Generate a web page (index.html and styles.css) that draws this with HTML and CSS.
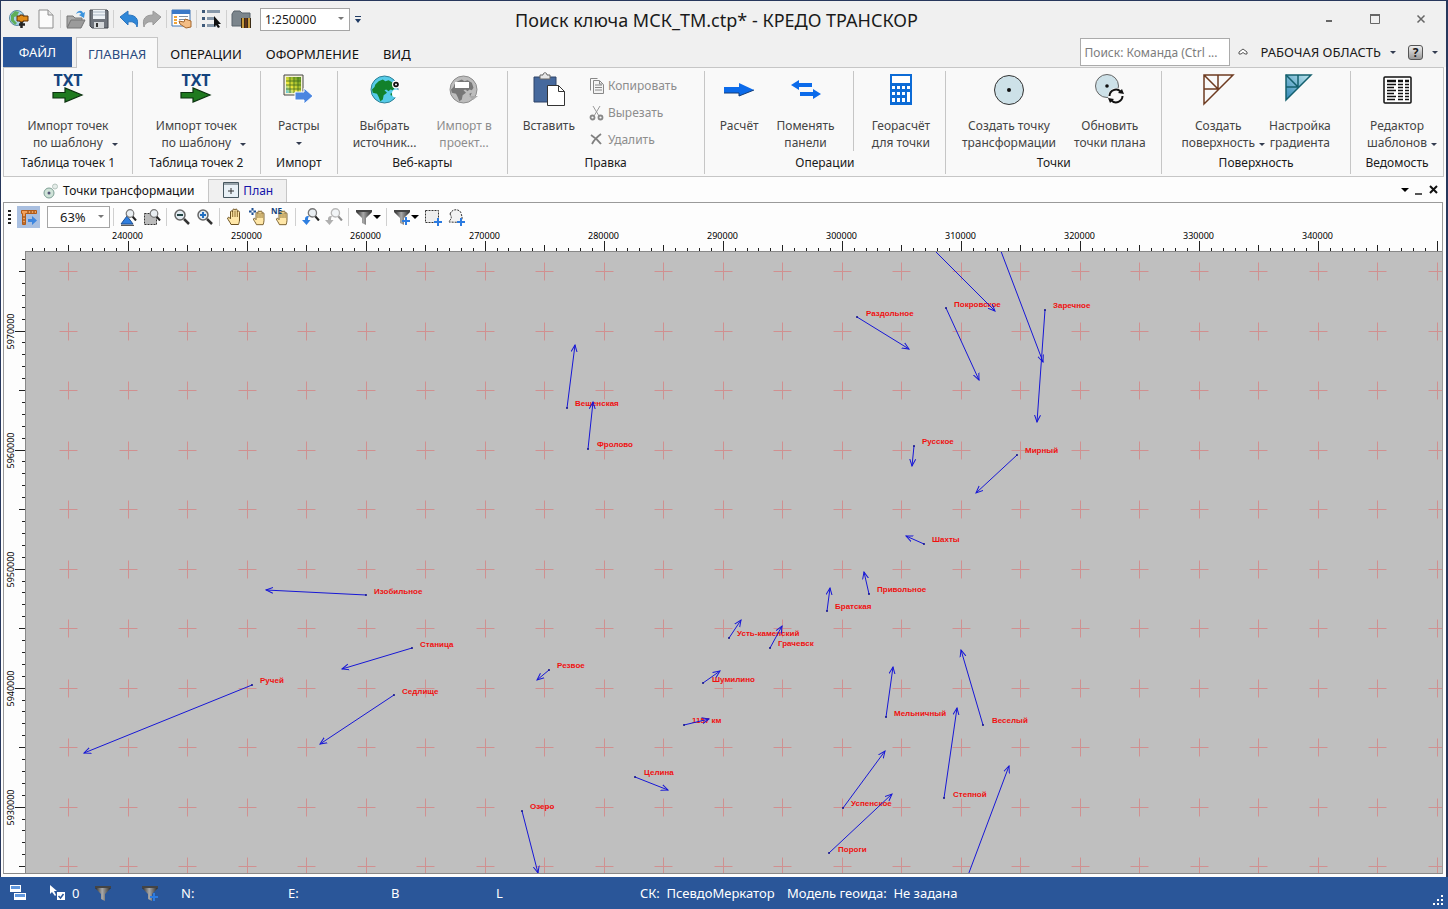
FILE: index.html
```html
<!DOCTYPE html>
<html lang="ru">
<head>
<meta charset="utf-8">
<title>Поиск ключа МСК_ТМ.ctp* - КРЕДО ТРАНСКОР</title>
<link rel="stylesheet" href="styles.css">
</head>
<body>
<svg class="defs" aria-hidden="true">
  <defs>
    <linearGradient id="gFunnel" x1="0" x2="1"><stop offset="0" stop-color="#222"/><stop offset=".45" stop-color="#aaa"/><stop offset="1" stop-color="#222"/></linearGradient>
    <linearGradient id="gTeal" x1="0" y1="1" x2="1" y2="0"><stop offset="0" stop-color="#2f86b5"/><stop offset="1" stop-color="#bfe6ee"/></linearGradient>
    <linearGradient id="gRaster" x1="0" y1="1" x2="1" y2="0"><stop offset="0" stop-color="#5cc6f0"/><stop offset=".35" stop-color="#f2e93c"/><stop offset="1" stop-color="#4f8f1e"/></linearGradient>
    <symbol id="funnel" viewBox="0 0 18 18"><path d="M1 2h16v2l-6 6v7l-4-2v-5L1 4z" fill="url(#gFunnel)"/><path d="M1 2h16v2H1z" fill="#444"/></symbol>
    <symbol id="plus" viewBox="0 0 8 8"><path d="M3 0h2v3h3v2H5v3H3V5H0V3h3z" fill="#2c7be0"/></symbol>
    <symbol id="hand" viewBox="0 0 18 18"><path d="M5 16.500C4 14 2 12 1.500 10c.7-1.200 2-.7 3 .8V4c0-1.500 2-1.500 2.200 0V2.200c0-1.500 2.200-1.500 2.300 0V2c.3-1.400 2.200-1.200 2.300.3v1.500c.4-1.300 2.200-1 2.200.5V12c0 2-.7 3-1 4.500z" fill="#ffe7a8" stroke="#6b5121"/><path d="M6.700 4v5M9 3v6M11.300 3.500V9" stroke="#8a6a2a"/></symbol>
    <symbol id="lens" viewBox="0 0 12 12"><path d="M7.500 7.500l3.500 4" stroke="#222" stroke-width="2"/><circle cx="5" cy="4.500" r="3.800" fill="#e9eef2" stroke="#777" stroke-width="1.200"/></symbol>
    <symbol id="txt" viewBox="0 0 34 34"><text x="17" y="14" text-anchor="middle" class="txt-mark">TXT</text><path d="M2 20.500h12V16l17 7-17 7v-4H2z" fill="#1f7a1f" stroke="#0c3310" stroke-width="1.200"/></symbol>
    <symbol id="land" viewBox="0 0 30 30"><path d="M4 9l4-4 5-2 3 2 4-1 5 3 2 6-2 3-3-1-2 2-3-2-2 1 3 3-4 3-1 5-3 2-2-5-2-4-5-1-1-4 3-3zM22 20l3-1-2 4z"/></symbol>
  </defs>
</svg>
<div class="window">
  <header class="titlebar">
    <div class="quick">
      <span class="app-mark"><svg width="20" height="20" viewBox="0 0 20 20"><circle cx="8" cy="9" r="7.500" fill="#a9d3ea" stroke="#5b8aa3"/><path d="M2 6l4-4 4 1-2 4-3 1v3l3 3-2 2-4-4z" fill="#5fae5a"/><path d="M8 7h3V6h3v1h5v5h-5v1h-3v-1H8z" fill="#e08a17" stroke="#5c2e05"/><path d="M12.500 13v6M10 15.500h6" stroke="#222" stroke-width="2.500"/></svg></span>
      <button class="qb" aria-label="Создать"><svg width="20" height="20" viewBox="0 0 20 20"><path d="M3 1h9l5 5v13H3z" fill="#fbfbfb" stroke="#8d8d8d"/><path d="M12 1v5h5" fill="#e3e3e3" stroke="#8d8d8d"/></svg></button>
      <i class="vsep"></i>
      <button class="qb" aria-label="Открыть"><svg width="22" height="20" viewBox="0 0 22 20"><path d="M2 18V7h6l2 2h7v3" fill="#a9a9a9" stroke="#777"/><path d="M2 19l4-8h14l-4 8z" fill="#9b9b9b" stroke="#747474"/><path d="M11 5c2-4 6-4 7-1l2-1-1 6-5-3 2-1c-1-2-3-1-5 0z" fill="#3b93dd"/></svg></button>
      <button class="qb" aria-label="Сохранить"><svg width="20" height="20" viewBox="0 0 20 20"><path d="M1 1h17l1 1v17H3l-2-2z" fill="#6f747c" stroke="#42464d"/><path d="M4 1h12v9H4z" fill="#eef2f6"/><path d="M4 3h12M4 6h12" stroke="#a7b4c2"/><path d="M5 13h10v6H5z" fill="#d5d8db"/><path d="M7 14h2v4H7z" fill="#333"/></svg></button>
      <i class="vsep"></i>
      <button class="qb" aria-label="Отменить"><svg width="20" height="18" viewBox="0 0 20 18"><path d="M1 7l8-6v4c8 0 11 4 9 12-1-4-4-6-9-5v3z" fill="#2f87d8" stroke="#2b74bd"/></svg></button>
      <button class="qb" aria-label="Повторить"><svg width="20" height="18" viewBox="0 0 20 18"><path d="M19 7l-8-6v4C3 5 0 9 2 17c1-4 4-6 9-5v3z" fill="#a8a8a8" stroke="#999"/></svg></button>
      <i class="vsep"></i>
      <button class="qb" aria-label="Свойства таблицы"><svg width="21" height="20" viewBox="0 0 21 20"><path d="M1 1h18v16H1z" fill="#fff" stroke="#4377b5"/><path d="M1 1h18v4H1z" fill="#3a79c8"/><path d="M3 7h3v2H3zM3 10h3v2H3zM3 13h3v2H3z" fill="#f0a53a"/><path d="M8 7.500h9M8 10.500h9" stroke="#7d8fa3"/><path d="M8 12l5 1 1-3 6 2v6l-5 1-6-4z" fill="#f3bd85" stroke="#a4662c"/></svg></button>
      <i class="vsep"></i>
      <button class="qb" aria-label="Выбор слоёв"><svg width="21" height="20" viewBox="0 0 21 20"><path d="M1 1h3v3H1zM1 8h3v3H1zM1 15h3v3H1z" fill="#3f5a7a"/><path d="M6 2.500h13M6 9.500h8M6 16.500h9" stroke="#8798aa" stroke-width="3"/><path d="M13 7v11l2-2 2 3 2-1-2-3h3z" fill="#111"/></svg></button>
      <i class="vsep"></i>
      <button class="qb" aria-label="Архив"><svg width="22" height="20" viewBox="0 0 22 20"><path d="M1 17V5l2-3h6l2 2h8v13z" fill="#7b858c" stroke="#59626a"/><path d="M10 9h10v10H10z" fill="#3a2b16"/><path d="M12 9v10M18 9v10" stroke="#c99b3c" stroke-width="2"/><path d="M15 9v10" stroke="#8a3f20"/></svg></button>
      <span class="combo scale"><select aria-label="Масштаб плана"><option>1:250000</option></select><i class="caret dim"></i></span>
      <button class="more" aria-label="Настроить панель"><svg width="6" height="7" viewBox="0 0 6 7"><path d="M0 .500h6" stroke="#1f3a63"/><path d="M0 3h6L3 7z" fill="#1f3a63"/></svg></button>
    </div>
    <h1>Поиск ключа МСК_ТМ.ctp* - КРЕДО ТРАНСКОР</h1>
    <div class="winctl">
      <button aria-label="Свернуть"><svg width="10" height="10" viewBox="0 0 10 10"><path d="M2 7h6" stroke="#666" stroke-width="2"/></svg></button>
      <button aria-label="Развернуть"><svg width="10" height="10" viewBox="0 0 10 10"><path d="M.500 1h9v8.500h-9z" fill="none" stroke="#666"/><path d="M0 1h10" stroke="#666" stroke-width="2"/></svg></button>
      <button aria-label="Закрыть"><svg width="10" height="10" viewBox="0 0 10 10"><path d="M1.500 1.500l7 7M8.500 1.500l-7 7" stroke="#666" stroke-width="1.500"/></svg></button>
    </div>
  </header>

  <nav class="menu">
    <button class="file">ФАЙЛ</button>
    <button class="tab on">ГЛАВНАЯ</button>
    <button class="tab">ОПЕРАЦИИ</button>
    <button class="tab">ОФОРМЛЕНИЕ</button>
    <button class="tab">ВИД</button>
    <div class="menu-right">
      <input class="search" type="text" aria-label="Поиск команды" placeholder="Поиск: Команда (Ctrl ...">
      <button class="plain" aria-label="Свернуть ленту"><svg width="10" height="8" viewBox="0 0 10 8"><path d="M1 4l4-3 4 3v2H7L5 4.500 3 6H1z" fill="#fff" stroke="#555"/></svg></button>
      <button class="plain area">РАБОЧАЯ ОБЛАСТЬ<i class="caret"></i></button>
      <button class="plain area" aria-label="Справка"><span class="help">?</span><i class="caret"></i></button>
    </div>
  </nav>

  <section class="ribbon" aria-label="Лента">
    <div class="group"><div class="items">
      <button class="big"><svg width="34" height="34"><use href="#txt"/></svg><span>Импорт точек<br>по шаблону<i class="caret far"></i></span></button>
    </div><h2>Таблица точек 1</h2></div>
    <div class="group"><div class="items">
      <button class="big"><svg width="34" height="34"><use href="#txt"/></svg><span>Импорт точек<br>по шаблону<i class="caret far"></i></span></button>
    </div><h2>Таблица точек 2</h2></div>
    <div class="group"><div class="items">
      <button class="big"><svg width="34" height="34" viewBox="0 0 34 34"><path d="M2 3h19v20H2z" fill="#f6f3d8" stroke="#444"/><path d="M4 5h15v16H4z" fill="url(#gRaster)"/><path d="M8 5v16M12 5v16M16 5v16M4 9h15M4 13h15M4 17h15" stroke="#3f6a1c" stroke-width=".8"/><path d="M13 20h9v-4l9 8-9 8v-4h-9z" fill="#4b86e0" stroke="#fff"/></svg><span>Растры<br><i class="caret solo"></i></span></button>
    </div><h2>Импорт</h2></div>
    <div class="group"><div class="items g20">
      <button class="big"><svg width="34" height="34" viewBox="0 0 34 34"><circle cx="16.500" cy="17.500" r="13.500" fill="#55cbe8" stroke="#2e7f95"/><use href="#land" x="4" y="5" width="25" height="25" fill="#12812b"/><circle cx="28" cy="12.500" r="4" fill="#fff"/><circle cx="28" cy="12.500" r="2.800" fill="#111"/><circle cx="28" cy="12.500" r="1" fill="#fff"/><circle cx="28" cy="21.500" r="4" fill="#fff"/></svg><span>Выбрать<br>источник...</span></button>
      <button class="big" disabled><svg width="34" height="34" viewBox="0 0 34 34"><circle cx="16.500" cy="17.500" r="13.500" fill="#bdbdbd" stroke="#8c8c8c"/><use href="#land" x="4" y="5" width="25" height="25" fill="#777"/><path d="M8 10h14v6H8z" fill="#fff"/><path d="M22 24h9l-5 4z" fill="#aaa"/></svg><span>Импорт в<br>проект...</span></button>
    </div><h2>Веб-карты</h2></div>
    <div class="group"><div class="items g15 start">
      <button class="big"><svg width="34" height="34" viewBox="0 0 34 34"><path d="M2 5h22v25H2z" fill="#46699d" stroke="#2e4569"/><path d="M8 7V3h3c0-3 4-3 4 0h3v4z" fill="#e6e6e6" stroke="#666"/><path d="M15.500 13.500h11l6 6v14h-17z" fill="#fff" stroke="#333"/><path d="M26.500 13.500v6h6" fill="none" stroke="#333"/></svg><span>Вставить</span></button>
      <div class="stack">
        <button disabled><svg width="16" height="18" viewBox="0 0 16 18"><path d="M1.500 13.500v-12h7" fill="none" stroke="#888"/><path d="M4.500 3.500h6l4 4v9h-10z" fill="#f3f3f3" stroke="#888"/><path d="M6 8h7M6 10.500h7M6 13h7M10.500 4v3h3" fill="none" stroke="#888"/></svg>Копировать</button>
        <button disabled><svg width="16" height="18" viewBox="0 0 16 18"><path d="M4 2l6 10M11 2L5 12" stroke="#999"/><circle cx="3.500" cy="13.500" r="2" fill="none" stroke="#888" stroke-width="1.800"/><circle cx="11.500" cy="13.500" r="2" fill="none" stroke="#888" stroke-width="1.800"/></svg>Вырезать</button>
        <button disabled><svg width="16" height="18" viewBox="0 0 16 18"><path d="M2 4c3 2 7 5 10 9M12 3C8 6 5 9 3 13" fill="none" stroke="#808080" stroke-width="1.800"/></svg>Удалить</button>
      </div>
    </div><h2>Правка</h2></div>
    <div class="group"><div class="items g19">
      <button class="big"><svg width="34" height="34" viewBox="0 0 34 34"><path d="M2 15h15v-4l15 7-15 6v-3H2z" fill="#0c6bea"/><path d="M2 21h15v3l15-6" fill="none" stroke="#123c78"/></svg><span>Расчёт</span></button>
      <button class="big"><svg width="34" height="34" viewBox="0 0 34 34"><path d="M2 13l8-5v3h13v4H10v3zM32 22l-8-5v3H11v4h13v3z" fill="#0c6bea"/></svg><span>Поменять<br>панели</span></button>
      <i class="split"></i>
      <button class="big"><svg width="34" height="34" viewBox="0 0 34 34"><path d="M6 2h22v31H6z" fill="#0c6bd6"/><path d="M8 4h18v7H8zM8 14h3v3H8zM13 14h3v3h-3zM18 14h3v3h-3zM23 14h3v3h-3zM8 20h3v3H8zM13 20h3v3h-3zM18 20h3v3h-3zM8 26h3v4H8zM13 26h3v4h-3zM18 26h3v4h-3zM23 20h3v10h-3z" fill="#fff"/></svg><span>Георасчёт<br>для точки</span></button>
    </div><h2>Операции</h2></div>
    <div class="group"><div class="items g19">
      <button class="big"><svg width="34" height="34" viewBox="0 0 34 34"><circle cx="17" cy="18" r="14.500" fill="#cde1e8" stroke="#333"/><circle cx="17" cy="18" r="2" fill="#111"/></svg><span>Создать точку<br>трансформации</span></button>
      <button class="big"><svg width="34" height="34" viewBox="0 0 34 34"><circle cx="14" cy="14" r="11.500" fill="#cde1e8" stroke="#666"/><circle cx="14" cy="14" r="1.800" fill="#111"/><circle cx="23" cy="24" r="8" fill="#f8f8f8"/><path d="M16.500 24a6.500 6.500 0 0 1 11-4.500M29.500 24a6.500 6.500 0 0 1-11 4.500" fill="none" stroke="#111" stroke-width="2"/><path d="M25 21l6 1-2-5zM21 27l-6-1 2 5z" fill="#111"/></svg><span>Обновить<br>точки плана</span></button>
    </div><h2>Точки</h2></div>
    <div class="group"><div class="items g15">
      <button class="big"><svg width="34" height="34" viewBox="0 0 34 34"><path d="M3 3h29L3 32zM3 3l14.500 14.500M17 3v14H3" fill="none" stroke="#6e3b20" stroke-width="1.500"/></svg><span>Создать<br>поверхность<i class="caret near"></i></span></button>
      <button class="big"><svg width="34" height="34" viewBox="0 0 34 34"><path d="M3 3h25L3 28z" fill="url(#gTeal)" stroke="#14606e" stroke-width="1.500"/><path d="M3 3l12.500 12.500M15 3v12H3" fill="none" stroke="#14606e" stroke-width="1.500"/></svg><span>Настройка<br>градиента</span></button>
    </div><h2>Поверхность</h2></div>
    <div class="group"><div class="items">
      <button class="big"><svg width="34" height="34" viewBox="0 0 34 34"><rect x="4" y="5" width="27" height="26" rx="1" fill="#fff" stroke="#111" stroke-width="1.500"/><path d="M7 9h9M18 9h5M25 9h4" stroke="#111" stroke-width="2.500"/><path d="M7 12.500h9M7 15.500h7M7 18.500h9M7 21.500h7M7 24.500h9M7 27.500h8M18 12.500h5M18 15.500h5M18 18.500h5M18 21.500h5M18 24.500h5M18 27.500h5M25 12.500h4M25 15.500h4M25 18.500h4M25 21.500h4M25 24.500h4M25 27.500h4" stroke="#111" stroke-width="1.500"/></svg><span>Редактор<br>шаблонов<i class="caret near"></i></span></button>
    </div><h2>Ведомость</h2></div>
  </section>

  <div class="doctabs">
    <button class="doc"><svg width="16" height="16" viewBox="0 0 16 16"><circle cx="6" cy="10" r="5" fill="#cfe3d8" stroke="#7d9e94"/><circle cx="6" cy="10" r="1.500" fill="#557"/><circle cx="12" cy="3.500" r="2.500" fill="#e4ece8" stroke="#b5c4be"/></svg>Точки трансформации</button>
    <button class="doc on"><svg width="16" height="16" viewBox="0 0 16 16"><path d="M.500 .500h15v15H.500z" fill="#e9f1f6" stroke="#46565e"/><path d="M1 2h14" stroke="#46565e"/><path d="M5 9h6M8 6v6" stroke="#333"/></svg>План</button>
    <div class="docctl">
      <button class="plain" aria-label="Список окон"><i class="caret black"></i></button>
      <button class="plain" aria-label="Свернуть окно"><svg width="8" height="10" viewBox="0 0 8 10"><path d="M0 9h7" stroke="#555" stroke-width="2"/></svg></button>
      <button class="plain" aria-label="Закрыть окно"><svg width="9" height="9" viewBox="0 0 9 9"><path d="M1 1l7 7M8 1L1 8" stroke="#111" stroke-width="2"/></svg></button>
    </div>
  </div>

  <main class="pane">
    <div class="tools" role="toolbar">
      <i class="grip"></i>
      <button class="tool pressed" aria-label="Линейки"><svg width="18" height="18" viewBox="0 0 18 18"><path d="M1.500 2.500h15v3h-11v11h-3v-11h-1z" fill="#f3a05a" stroke="#b25a17"/><path d="M8 3v2M11 3v2M14 3v2M3 9h2M3 12h2M3 15h2" stroke="#7a3a0a"/><path d="M8 11h4V8l5 4.500-5 4.500v-3H8z" fill="#3d86e0"/></svg></button>
      <span class="combo zoom"><select aria-label="Масштаб"><option>63%</option></select><i class="caret dim"></i></span>
      <i class="vsep"></i>
      <button class="tool" aria-label="Показать всё"><svg width="18" height="18" viewBox="0 0 18 18"><path d="M1 16h12L7 8z" fill="#2f7fe0" stroke="#1d4f92"/><path d="M1 17.300h13" stroke="#333"/><use href="#lens" x="5" y="1" width="12" height="12"/></svg></button>
      <button class="tool" aria-label="Показать выбранное"><svg width="18" height="18" viewBox="0 0 18 18"><path d="M1.500 5.500h12v11h-12z" fill="#bbb" stroke="#333" stroke-dasharray="2 1"/><use href="#lens" x="6" y="1" width="12" height="12"/></svg></button>
      <i class="vsep"></i>
      <button class="tool" aria-label="Уменьшить"><svg width="18" height="18" viewBox="0 0 18 18"><path d="M11 11l5 5" stroke="#333" stroke-width="2.500"/><circle cx="7" cy="7" r="5" fill="#e3ebf2" stroke="#666" stroke-width="1.500"/><path d="M4 7h6" stroke="#244" stroke-width="2"/></svg></button>
      <button class="tool" aria-label="Увеличить"><svg width="18" height="18" viewBox="0 0 18 18"><path d="M11 11l5 5" stroke="#333" stroke-width="2.500"/><circle cx="7" cy="7" r="5" fill="#e3ebf2" stroke="#666" stroke-width="1.500"/><path d="M4 7h6M7 4v6" stroke="#236fc0" stroke-width="2"/></svg></button>
      <i class="vsep"></i>
      <button class="tool" aria-label="Рука"><svg width="18" height="18"><use href="#hand"/></svg></button>
      <button class="tool" aria-label="Переместить план"><svg width="18" height="18" viewBox="0 0 18 18"><use href="#hand" x="3" y="2" width="16" height="16"/><path d="M3.500 0v7M0 3.500h7" stroke="#1d4f92" stroke-width="2" stroke-dasharray="2.500 2"/></svg></button>
      <button class="tool" aria-label="Переместить по координатам"><svg class="spill" width="18" height="18" viewBox="0 0 18 18"><use href="#hand" x="3" y="2" width="16" height="16"/><text x="-1" y="6" class="ne-mark">NE</text></svg></button>
      <i class="vsep"></i>
      <button class="tool" aria-label="Предыдущий вид"><svg width="18" height="18" viewBox="0 0 18 18"><use href="#lens" x="5" y="0" width="13" height="13"/><path d="M7 8c-4 0-4 2-4 4H0l4.500 5 4-5H6c0-2 0-2 1-4z" fill="#2f7fe0"/></svg></button>
      <button class="tool dimmed" aria-label="Следующий вид"><svg width="18" height="18" viewBox="0 0 18 18"><use href="#lens" x="5" y="0" width="13" height="13"/><path d="M7 8c-4 0-4 2-4 4H0l4.500 5 4-5H6c0-2 0-2 1-4z" fill="#666"/></svg></button>
      <i class="vsep"></i>
      <button class="tool wide" aria-label="Фильтр"><svg width="18" height="18"><use href="#funnel"/></svg><i class="caret black"></i></button>
      <i class="vsep"></i>
      <button class="tool wide" aria-label="Добавить фильтр"><svg width="18" height="18"><use href="#funnel"/><use href="#plus" x="9" y="9" width="8" height="8"/></svg><i class="caret black"></i></button>
      <button class="tool" aria-label="Выбор рамкой"><svg width="18" height="18" viewBox="0 0 18 18"><path d="M1.500 2.500h13v12h-13z" fill="#eee" stroke="#333" stroke-dasharray="2 1"/><use href="#plus" x="10" y="10" width="8" height="8"/></svg></button>
      <button class="tool" aria-label="Выбор контуром"><svg width="18" height="18" viewBox="0 0 18 18"><path d="M3 6c2-6 10-5 11-1s2 6 0 8-8 1-12 1c1-3 4-3 1-8z" fill="#f3f3f3" stroke="#333" stroke-dasharray="2 1"/><use href="#plus" x="10" y="10" width="8" height="8"/></svg></button>
    </div>
    <div class="plan">
      <svg class="ruler-x" id="rulerX"></svg>
      <svg class="ruler-y" id="rulerY"></svg>
      <svg class="map" id="map" role="img" aria-label="План с векторами расхождений">
        <defs><marker id="tip" viewBox="0 0 8 8" refX="7" refY="4" markerWidth="8" markerHeight="8" markerUnits="userSpaceOnUse" orient="auto"><path d="M0 1l7 3-7 3" fill="none" stroke="#1717d6"/></marker></defs>
      </svg>
    </div>
  </main>

  <footer class="status">
    <svg width="18" height="18" viewBox="0 0 18 18"><path d="M1 1h11v7H1zM5 9h12v7H5z" fill="#fff"/><path d="M2 2h9v3H2zM6 10h10v3H6z" fill="#5f97de"/></svg>
    <span class="pick"><svg width="18" height="18" viewBox="0 0 18 18"><path d="M1 1v9l2-2 3 4 1-1-2-4h3z" fill="#fff"/><path d="M8 8h8v8H8z" fill="#fff"/><path d="M9.500 12l2 2 3-4" fill="none" stroke="#2a5699" stroke-width="1.500"/></svg>0</span>
    <svg width="18" height="18"><use href="#funnel"/></svg>
    <svg width="18" height="18"><use href="#funnel"/><use href="#plus" x="9" y="9" width="8" height="8"/></svg>
    <span>N:</span><span>E:</span><span>B</span><span>L</span>
    <span>СК:&nbsp; ПсевдоМеркатор</span>
    <span>Модель геоида:&nbsp; Не задана</span>
    <svg class="size-grip" width="11" height="11" viewBox="0 0 11 11"><path d="M8 0h2v2H8zM4 4h2v2H4zM8 4h2v2H8zM0 8h2v2H0zM4 8h2v2H4zM8 8h2v2H8z" fill="#fff"/></svg>
  </footer>
</div>
<script src="map.js"></script>
</body>
</html>
```
FILE: styles.css
```css
* { box-sizing: border-box; }
body { margin: 0; font-family: "Noto Sans", "Open Sans", sans-serif; font-size: 12px; color: #1a1a1a; }
button, input, select { font: inherit; color: inherit; margin: 0; }
button { background: none; border: 0; padding: 0; }
svg { display: block; flex: none; }
h1, h2 { margin: 0; font-weight: 400; }
.defs { position: absolute; width: 0; height: 0; }

.window { min-height: 100vh; display: flex; flex-direction: column; background: #fdfdfd; border: solid #27375c; border-width: 1px 2px 0 1px; }

.titlebar { display: grid; grid-template-columns: 1fr auto 1fr; align-items: center; height: 36px; padding: 0 2px 0 8px; background: #f0f0f0; }
.titlebar h1 { font-size: 18px; padding: 2px 20px 0 0; white-space: nowrap; }
.quick { display: flex; align-items: center; }
.app-mark { width: 23px; }
.qb { width: 23px; height: 24px; display: grid; place-items: center; }
.vsep { width: 1px; height: 18px; margin: 0 3px; background: #d0d0d0; }
.app-mark + .qb { margin-left: 2px; }
.combo { position: relative; display: block; }
.combo select { appearance: none; width: 100%; height: 100%; background: #fff; border: 1px solid #a5a5a5; border-radius: 0; padding: 0 4px; }
.combo .caret { position: absolute; right: 6px; top: 9px; }
.scale { width: 90px; height: 23px; margin-left: 7px; }
.more { margin-left: 3px; padding: 2px; }
.winctl { justify-self: end; display: flex; }
.winctl button { width: 46px; height: 34px; display: grid; place-items: center; }

.caret { display: inline-block; flex: none; width: 0; height: 0; border: 3px solid transparent; border-top-color: #333c50; border-bottom-width: 0; }
.caret.black { border-width: 4px 4px 0; border-top-color: #000; }
.caret.dim { border-top-color: #777; }
.caret.far { margin: 0 -15px 1px 9px; }
.caret.near { margin: 0 -10px 1px 4px; }
.caret.solo { margin-bottom: 2px; }

.menu { display: flex; height: 30px; padding-left: 2px; background: #f0f0f0; font-size: 13px; }
.file { width: 69px; margin-right: 4px; background: #2a5699; color: #fff; }
.tab { padding: 2px 11px 0; border: 1px solid transparent; border-bottom: 0; color: #111; }
.tab.on { background: #f9f9f9; border-color: #c6c6c6; color: #2a4a80; margin-bottom: -1px; position: relative; }
.menu-right { margin-left: auto; display: flex; align-items: center; padding-right: 8px; }
.search { width: 150px; height: 28px; border: 1px solid #ababab; padding: 0 3px; background: #fff; border-radius: 0; font-size: 12px; }
.search::placeholder { color: #7d7d7d; opacity: 1; }
.plain { display: flex; align-items: center; }
.menu-right .plain { margin-left: 8px; }
.menu-right .area { gap: 9px; margin-left: 12px; }
.help { width: 15px; height: 15px; border: 1px solid #555; border-radius: 3px; background: linear-gradient(#eee, #999); font-size: 12px; font-weight: 700; line-height: 13px; text-align: center; }

.ribbon { display: grid; grid-template-columns: 129fr 128fr 77fr 170fr 197fr 242fr 216fr 189fr 92fr; margin: 0 2px; background: #f9f9f9; border: 1px solid #c6c6c6; height: 110px; }
.group { position: relative; display: flex; flex-direction: column; align-items: stretch; min-width: 0; margin: 3px 0 2px; border-right: 1px solid #c6c6c6; }
.group:last-child { border-right: 0; }
.group h2 { font-size: 12px; line-height: 16px; text-align: center; white-space: nowrap; margin-top: auto; margin-bottom: 3px; }
.items { display: flex; justify-content: center; }
.g20 { gap: 20px; } .g19 { gap: 18px; } .g15 { gap: 14px; }
.start { justify-content: flex-start; padding-left: 15px; }
.big { display: flex; flex-direction: column; align-items: center; gap: 11px; line-height: 17px; color: #444; white-space: nowrap; text-align: center; }
.big svg { margin-top: 1px; }
.big:disabled, .stack button:disabled { color: #8d8d8d; }
.stack { display: flex; flex-direction: column; padding-top: 1px; }
.stack button { display: flex; align-items: center; gap: 3px; height: 27px; }
.split { width: 1px; height: 80px; background: #c6c6c6; }
.txt-mark { font: 700 16px "Noto Sans", sans-serif; fill: #14437e; }
.ne-mark { font: 700 8px "Noto Sans", sans-serif; fill: #14437e; }
.spill { overflow: visible; }

.doctabs { display: flex; align-items: flex-end; height: 25px; margin: 0 3px 0 2px; padding-left: 32px; }
.doc { display: flex; align-items: center; gap: 4px; height: 23px; padding: 0 14px 0 8px; color: #111; }
.doc.on { background: #f0f0f0; border: 1px solid #c6c6c6; border-bottom: 0; color: #1414a8; padding: 0 13px 2px 14px; }
.docctl { margin-left: auto; align-self: center; display: flex; gap: 6px; padding-right: 5px; }

.pane { flex: 1; display: flex; flex-direction: column; margin: 0 3px 3px 2px; border: 1px solid #9a9a9a; border-bottom-color: #888; }
.tools { display: flex; align-items: center; height: 27px; padding-left: 4px; }
.tools .vsep { margin: 0 3px; }
.grip { width: 3px; height: 14px; margin-right: 6px; background: repeating-linear-gradient(#222 0 2px, transparent 2px 4px); }
.tool { width: 23px; height: 22px; display: flex; align-items: center; justify-content: center; }
.tool.pressed { background: #a9bfe0; }
.tool.wide { width: 31px; }
.tool.dimmed { opacity: .5; }
.zoom { width: 63px; height: 22px; margin-left: 7px; font-size: 13px; }
.zoom select { padding-left: 12px; }
.plan { flex: 1; display: grid; grid-template: 21px 1fr / 21px 1fr; }
.plan svg { width: 100%; height: 100%; }
.ruler-x { grid-column: 2; overflow: visible; }
.ruler-y { grid-row: 2; }
.map { background: #bfbfbf; border: solid #888; border-width: 1px 0 0 1px; }
.tick { stroke: #222; fill: none; }
.scale-text { font: 9px "Noto Sans", sans-serif; fill: #000; text-anchor: middle; }
.cross { stroke: #d09090; fill: none; }
.vector { stroke: #1717d6; }
.start-dot { fill: #10108c; }
.name { font: 700 8px "Liberation Sans", Arial, sans-serif; fill: #f01010; }

.status { display: grid; grid-template-columns: 40px 45px 47px 40px 107px 103px 105px 144px 147px 1fr auto; align-items: center; height: 32px; margin: 0 -2px 0 -1px; padding: 0 4px 0 9px; background: #2a5699; color: #fff; font-size: 13px; }
.pick { display: flex; align-items: center; gap: 5px; }
.size-grip { align-self: end; margin-bottom: 3px; }
```
FILE: map.js
```js
const NS = 'http://www.w3.org/2000/svg';
const STEP = 59.52;
// First grid line, measured in the rulers; the map starts one pixel later because of its border.
const X0 = 43;
const Y0 = 20;

function add(parent, tag, attrs, text) {
  const el = document.createElementNS(NS, tag);
  for (const key in attrs) el.setAttribute(key, attrs[key]);
  if (text) el.textContent = text;
  parent.appendChild(el);
}

const map = document.getElementById('map');
const rulerX = document.getElementById('rulerX');
const rulerY = document.getElementById('rulerY');
const width = map.clientWidth;
const height = map.clientHeight;

let d = '';
for (let i = -3; X0 + i * STEP / 5 < width; i++) {
  const x = Math.round(X0 + i * STEP / 5) + 0.5;
  const major = (i - 5) % 10 === 0;
  const len = major ? 10 : i % 5 === 0 ? 6 : 3;
  d += `M${x} 21v${-len}`;
  const value = 235000 + i * 1000;
  if (major && x < width - 20) add(rulerX, 'text', { x: x - 1, y: 9, class: 'scale-text' }, String(value));
}
add(rulerX, 'path', { d, class: 'tick' });

d = '';
for (let i = -1; Y0 + i * STEP / 5 < height; i++) {
  const y = Math.round(Y0 + i * STEP / 5) + 0.5;
  const major = (i - 5) % 10 === 0;
  const len = major ? 10 : i % 5 === 0 ? 6 : 3;
  d += `M21 ${y}h${-len}`;
  const value = 5975000 - i * 1000;
  if (major) add(rulerY, 'text', { transform: `translate(10 ${y}) rotate(-90)`, class: 'scale-text' }, String(value));
}
add(rulerY, 'path', { d, class: 'tick' });

d = '';
for (let x = X0 - 1; x < width + 9; x += STEP)
  for (let y = Y0 - 1; y < height + 9; y += STEP)
    d += `M${Math.round(x) - 8.5} ${Math.round(y) + 0.5}h18m-9 -9v18`;
add(map, 'path', { d, class: 'cross' });

// start x, start y, end x, end y, name, name x, name y
const points = [
  [857, 317, 909, 349, 'Раздольное', 866, 313],
  [946, 308, 979, 380, 'Покровское', 954, 304],
  [1045, 310, 1037, 422, 'Заречное', 1053, 305],
  [930, 246, 995, 311],
  [999, 246, 1043, 362],
  [567, 408, 575, 345, 'Вешенская', 575, 403],
  [588, 449, 593, 402, 'Фролово', 597, 444],
  [914, 446, 912, 466, 'Русское', 922, 441],
  [1017, 455, 976, 493, 'Мирный', 1025, 450],
  [924, 544, 906, 536, 'Шахты', 932, 539],
  [869, 594, 864, 572, 'Привольное', 877, 589],
  [827, 611, 830, 588, 'Братская', 835, 606],
  [729, 638, 741, 620, 'Усть-каменский', 737, 633],
  [770, 648, 782, 626, 'Грачевск', 778, 643],
  [703, 683, 720, 671, 'Шумилино', 712, 679],
  [684, 725, 709, 719, '1157 км', 692, 720],
  [549, 670, 537, 680, 'Резвое', 557, 665],
  [366, 595, 266, 590, 'Изобильное', 374, 591],
  [412, 648, 342, 669, 'Станица', 420, 644],
  [252, 685, 84, 753, 'Ручей', 260, 680],
  [394, 695, 320, 744, 'Седлище', 402, 691],
  [635, 777, 668, 790, 'Целина', 644, 772],
  [522, 811, 538, 873, 'Озеро', 530, 806],
  [886, 717, 893, 667, 'Мельничный', 894, 713],
  [983, 725, 961, 650, 'Веселый', 992, 720],
  [944, 798, 957, 708, 'Степной', 953, 794],
  [843, 808, 885, 751, 'Успенское', 851, 803],
  [829, 853, 892, 794, 'Пороги', 838, 849],
  [967, 878, 1009, 766]
];
const OX = 26;
const OY = 252;
for (const [x1, y1, x2, y2, name, nx, ny] of points) {
  if (name) add(map, 'text', { x: nx - OX, y: ny - OY + 3, class: 'name' }, name);
  add(map, 'line', { x1: x1 - OX, y1: y1 - OY, x2: x2 - OX, y2: y2 - OY, class: 'vector', 'marker-end': 'url(#tip)' });
  add(map, 'circle', { cx: x1 - OX, cy: y1 - OY, r: 1, class: 'start-dot' });
}
```
